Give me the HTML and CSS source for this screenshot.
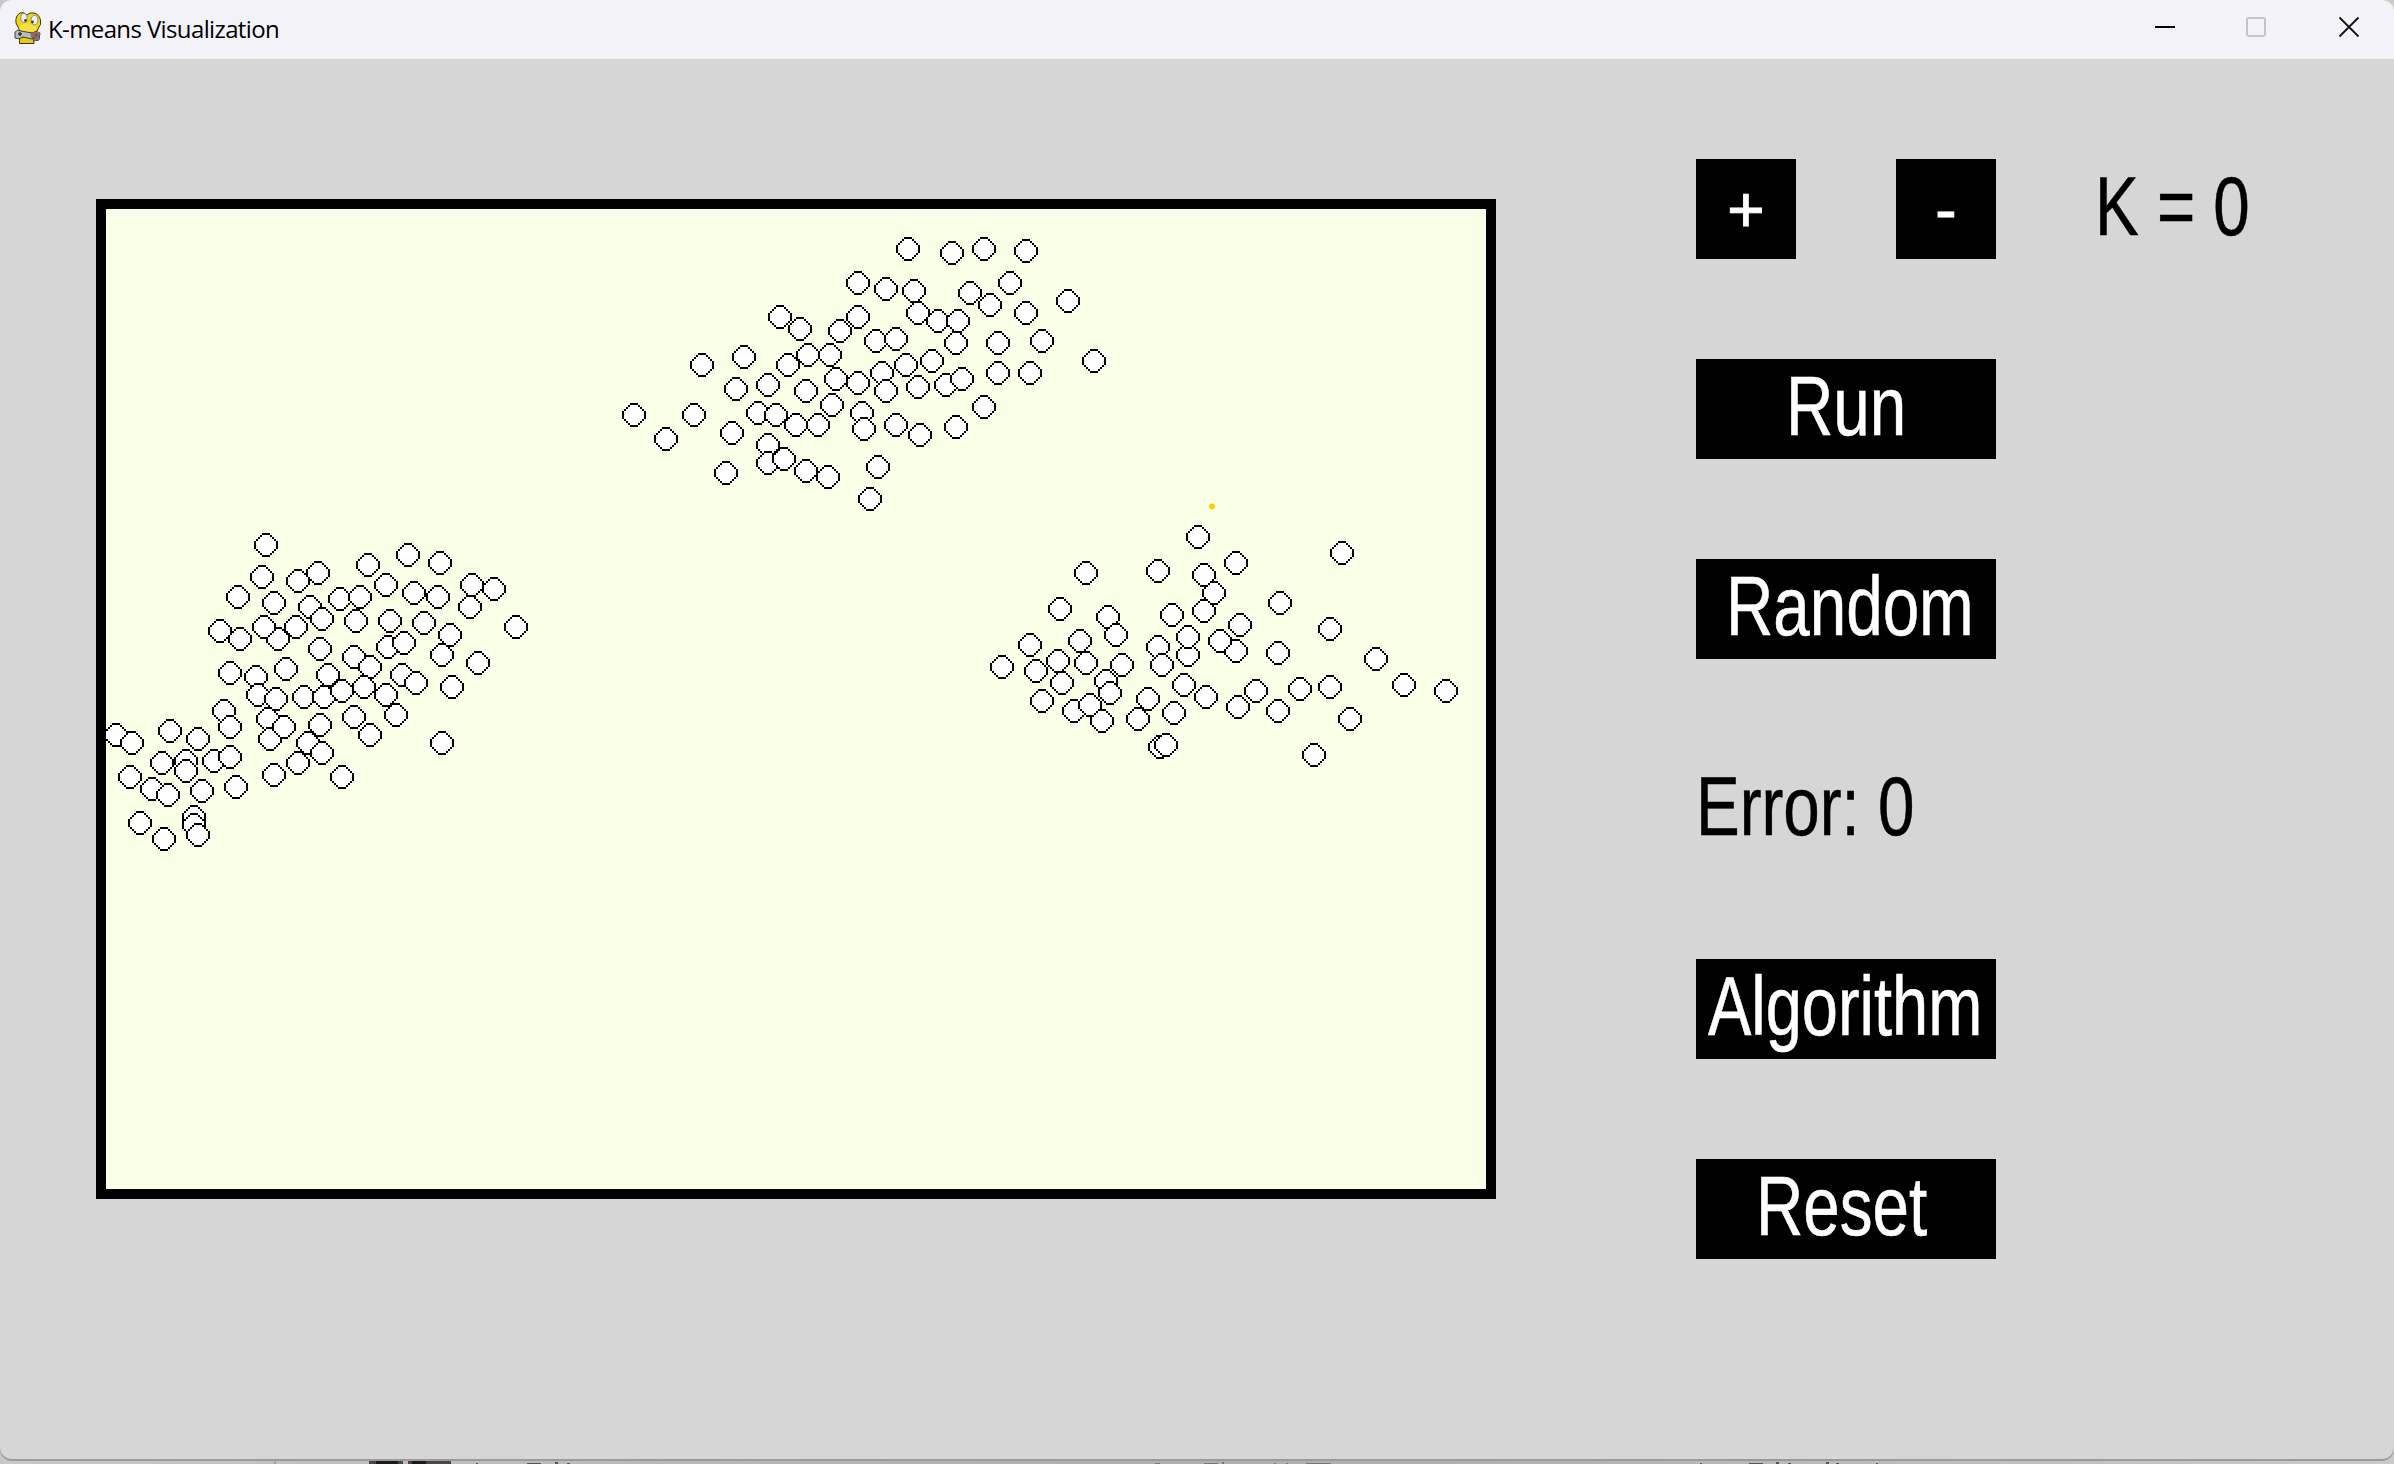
FILE: index.html
```html
<!DOCTYPE html>
<html lang="en">
<head>
<meta charset="utf-8">
<title>K-means Visualization</title>
<link rel="stylesheet" href="styles.css">
</head>
<body>
<div class="window">
  <header class="titlebar">
    <svg class="app-icon" width="28" height="32" viewBox="0 0 28 32" stroke="#3c3510" stroke-width="1">
      <path d="M6 25 Q5 29 5.500 31.500 H20 Q20 28 18.500 25 Z" fill="#e6c817"/>
      <path d="M2 11 Q1 4 6 1 Q10 -.5 13 3 Q16 0 20 1 Q25 2 26.500 8 Q27.500 13 25 15 Q24 20 19 21 H10 Q4 19 4 15 Z" fill="#f0d416"/>
      <ellipse cx="10" cy="6" rx="3.200" ry="4.500" fill="#eef0ee" stroke="#8a8a80"/>
      <ellipse cx="20.500" cy="8" rx="3.500" ry="4.800" fill="#eef0ee" stroke="#8a8a80"/>
      <circle cx="11.500" cy="8.500" r="1.400" fill="#345" stroke="none"/>
      <circle cx="18.500" cy="10" r="1.400" fill="#345" stroke="none"/>
      <path d="M5 15 Q9 10 15 12 Q22 13 23 17 Q20 20 14 20 Q7 20 5 15Z" fill="#f5df45" stroke="none"/>
      <path d="M1 20 Q3 17 7 19 L18 21 Q23 18 26 21 L25 28 Q21 30 18 27 L9 25 Q5 28 1 26Z" fill="#b9bbb9" stroke="#444"/>
      <path d="M16 21 L25 20 L25 28 L18 28 Z" fill="#777" stroke="none"/>
      <path d="M4 22 h4 M6 20 v4" stroke="#333" stroke-width="1.500"/>
      <circle cx="22" cy="23" r="1.500" fill="#d3222a" stroke="none"/>
      <circle cx="19.500" cy="26" r="1.300" fill="#d3222a" stroke="none"/>
    </svg>
    <span class="title">K-means Visualization</span>
    <svg class="controls" width="204" height="20" viewBox="0 0 204 20" fill="none">
      <path d="M0 10 H20" stroke="#000" stroke-width="2"/>
      <rect x="92" y="1" width="18" height="18" rx="2" stroke="#c3c3c8" stroke-width="2"/>
      <path d="M184.500 .5 L203.500 19.500 M203.500 .5 L184.500 19.500" stroke="#111" stroke-width="1.800"/>
    </svg>
  </header>
  <main class="content">
    <svg class="plot" viewBox="53 75 690 490" shape-rendering="crispEdges">
      <defs>
        <g id="point">
          <path d="M-2-6h4v1h1v1h1v1h1v1h1v4h-1v1h-1v1h-1v1h-1v1h-4v-1h-1v-1h-1v-1h-1v-1h-1v-4h1v-1h1v-1h1v-1h1z" fill="#000"/>
          <path d="M-2-5h4v1h1v1h1v1h1v4h-1v1h-1v1h-1v1h-4v-1h-1v-1h-1v-1h-1v-4h1v-1h1v-1h1z" fill="#fff"/>
        </g>
      </defs>
      <g id="points"></g>
      <circle cx="606" cy="223.700" r="1.500" fill="#fc0" shape-rendering="auto"/>
    </svg>
    <section class="panel">
      <div class="row">
        <button class="btn small"><span class="sign plus">+</span></button>
        <button class="btn small"><span class="sign minus">-</span></button>
        <div class="readout k"><span class="label">K = 0</span></div>
      </div>
      <button class="btn run"><span class="label">Run</span></button>
      <button class="btn random"><span class="label">Random</span></button>
      <div class="readout error"><span class="label">Error: 0</span></div>
      <button class="btn algorithm"><span class="label">Algorithm</span></button>
      <button class="btn reset"><span class="label">Reset</span></button>
    </section>
  </main>
</div>
<svg class="behind" viewBox="0 0 2394 20" shape-rendering="crispEdges">
  <path d="M274 15h2v5h-2z" fill="#a2a2a2"/>
  <path d="M369 15h82v5h-82z" fill="#4a4647"/>
  <path d="M376 16h22v4h-22zM412 16h14v4h-14z" fill="#1c191b"/>
  <path d="M403 16h5v4h-5z" fill="#c9b5b5"/>
  <path d="M476 19h2v1h-2zM527 19h14v1h-14zM555 18h3v2h-3zM567 19h3v1h-3z" fill="#555"/>
  <path d="M1155 19h5v1h-5zM1204 19h14v1h-14zM1222 18h2v2h-2zM1274 19h2v1h-2zM1286 19h2v1h-2zM1306 19h25v1h-25z" fill="#777"/>
  <path d="M1700 19h2v1h-2zM1749 19h14v1h-14zM1776 18h3v2h-3zM1788 19h3v1h-3zM1826 18h3v2h-3zM1836 19h3v1h-3zM1876 19h2v1h-2z" fill="#555"/>
</svg>
<script src="script.js"></script>
</body>
</html>
```
FILE: styles.css
```css
body {
  margin: 0;
  width: 2394px;
  height: 1464px;
  overflow: hidden;
  position: relative;
  background: linear-gradient(90deg, #c8c8c8, #b0b0b0 45%, #b0b0b0 60%, #cacaca);
  font-family: "Liberation Sans", Arial, sans-serif;
}

.window {
  position: relative;
  z-index: 1;
  height: 1459px;
  display: flex;
  flex-direction: column;
  overflow: hidden;
  background: #d6d6d6;
  border-radius: 12px;
  box-shadow: 0 2px 0 #9b9b9b;
}

.titlebar {
  flex: none;
  height: 59px;
  box-sizing: border-box;
  display: flex;
  align-items: flex-start;
  padding: 12px 35px 0 14px;
  background: #f2f2f8;
}

.app-icon {
  display: block;
}

.title {
  margin: 0 0 0 6px;
  font: 24px/34px "Open Sans", "Noto Sans", sans-serif;
  letter-spacing: -0.62px;
  white-space: nowrap;
  color: #000;
}

.controls {
  margin: 5px 0 0 auto;
  overflow: visible;
}

.content {
  flex: 1;
  display: flex;
  align-items: flex-start;
}

.plot {
  flex: none;
  display: block;
  width: 1380px;
  height: 980px;
  margin: 140px 0 0 96px;
  border: 10px solid #000;
  background: #f9ffe6;
}

.panel {
  display: flex;
  flex-direction: column;
  gap: 100px;
  margin: 100px 0 0 200px;
}

.row {
  display: flex;
  gap: 100px;
}

.btn,
.readout {
  display: block;
  width: 300px;
  height: 100px;
  margin: 0;
  padding: 0;
  border: 0;
  font: inherit;
  text-align: left;
}

.btn {
  background: #000;
  color: #fff;
}

.readout {
  color: #000;
}

.small {
  width: 100px;
}

.label {
  display: block;
  width: max-content;
  height: 100px;
  font-size: 84px;
  line-height: 95px;
  white-space: pre;
  -webkit-text-stroke: 0.6px currentColor;
  transform: scaleX(0.78);
  transform-origin: 0 0;
}

.run .label { margin-left: 90px; }
.random .label { margin-left: 30px; }
.algorithm .label { margin-left: 12px; transform: scaleX(0.773); }
.reset .label { margin-left: 60px; }
.error .label { margin-left: 0; }
.k .label { margin-left: -1px; }

.sign {
  display: block;
  height: 100px;
  font-size: 64px;
  line-height: 102px;
  text-align: center;
  -webkit-text-stroke: 1px currentColor;
}

.behind {
  position: absolute;
  left: 0;
  bottom: 0;
  width: 2394px;
  height: 20px;
}
```
FILE: script.js
```js
// Data points in surface pixels (the surface is drawn at 2x).
const POINTS = [
  // top cluster
  [390,129],[400,135],[420,136],[372,149],[351,153],[394,153],[404,148],[415,148],[368,165],[384,163],
  [403,166],[429,162],[418,160],[317,178],[347,178],[379,177],[388,178],[398,183],[409,183],[416,173],
  [333,190],[366,187],[384,193],[384,202],[392,200],[403,206],[414,209],[363,207],
  [454,95],[476,97],[492,95],[513,96],[429,112],[443,115],[457,116],[485,117],[505,112],[495,123],
  [534,121],[429,129],[459,127],[469,131],[479,131],[513,127],[438,141],[448,140],[478,142],[499,142],
  [521,141],[547,151],[453,153],[466,151],[441,157],[499,157],[515,157],[459,164],[473,163],[481,160],
  [443,166],[431,177],[432,185],[492,174],[448,183],[460,188],[478,184],[439,204],[435,220],
  // left cluster
  [133,243],[131,259],[119,269],[137,272],[149,261],[110,286],[120,290],[139,290],[132,284],[148,284],
  [115,307],[128,309],[143,305],[129,318],[138,320],[152,319],[204,248],[220,252],[184,253],[159,257],
  [193,263],[236,263],[247,265],[207,267],[219,269],[170,270],[180,269],[235,274],[155,274],[161,280],
  [178,281],[195,281],[212,282],[258,284],[225,288],[160,295],[194,294],[202,292],[221,298],[177,299],
  [185,304],[239,302],[164,308],[201,308],[208,312],[226,314],[162,319],[171,316],[182,314],[193,318],
  [198,328],[177,329],[160,333],[185,338],[149,352],[154,342],[161,347],[221,342],[171,359],
  [58,338],[66,342],[85,336],[99,340],[112,326],[115,334],[81,352],[93,351],[93,356],[107,351],
  [115,349],[65,359],[76,365],[84,368],[101,366],[118,364],[70,382],[82,390],[97,379],[97,383],
  [99,388],[134,330],[135,340],[142,334],[137,358],
  // right cluster
  [599,239],[543,257],[579,256],[602,258],[602,276],[607,267],[530,275],[554,279],[558,288],[586,278],
  [594,298],[594,289],[579,294],[581,303],[515,293],[540,291],[501,304],[518,306],[529,301],[543,302],
  [561,303],[553,311],[555,317],[531,312],[521,321],[537,326],[551,331],[545,323],[574,320],[569,330],
  [587,327],[592,313],[603,319],[580,344],[583,343],[671,247],[618,252],[640,272],[620,283],[665,285],
  [618,296],[610,291],[639,297],[688,300],[702,313],[723,316],[628,316],[650,315],[665,314],[619,324],
  [639,326],[675,330],[657,348]
];

const layer = document.getElementById("points");
for (const [x, y] of POINTS) {
  const use = document.createElementNS("http://www.w3.org/2000/svg", "use");
  use.setAttribute("href", "#point");
  use.setAttribute("x", x);
  use.setAttribute("y", y);
  layer.appendChild(use);
}
```
